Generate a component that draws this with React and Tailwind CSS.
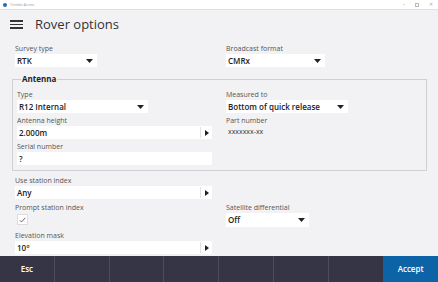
import React from 'react';

const font = { fontFamily: '"Open Sans", "Liberation Sans", sans-serif' };

const DownArrow = () => (
  <svg width="7" height="4" viewBox="0 0 7 4" className="shrink-0">
    <path d="M0 0 H7 L3.5 4 Z" fill="#222" />
  </svg>
);

const RightArrow = () => (
  <svg width="4" height="6" viewBox="0 0 4 6" className="shrink-0">
    <path d="M0 0 L4 3 L0 6 Z" fill="#222" />
  </svg>
);

const Label = ({ children }) => (
  <div className="h-[11px] leading-[11px] text-[7px] text-[#555]">{children}</div>
);

const Select = ({ label, value, width }) => (
  <div>
    <Label>{label}</Label>
    <div className={`flex items-center justify-between h-[13px] bg-white pl-[2px] pr-[4px] ${width}`}>
      <span className="text-[8px] font-semibold text-[#222]">{value}</span>
      <DownArrow />
    </div>
  </div>
);

const Input = ({ label, value, arrow }) => (
  <div>
    <Label>{label}</Label>
    <div className="flex items-center h-[13px] bg-white">
      <span className="flex-1 pl-[2px] text-[8px] font-semibold text-[#222]">{value}</span>
      {arrow && (
        <div className="flex items-center justify-center w-[12px] h-[11px] border-l border-[#e2e2e2]">
          <RightArrow />
        </div>
      )}
    </div>
  </div>
);

export default function App() {
  const footer = ['Esc', '', '', '', '', '', '', 'Accept'];
  return (
    <div className="flex flex-col h-screen bg-[#f2f2f4] overflow-hidden" style={font}>
      {/* window title bar */}
      <div className="flex items-center h-[10px] bg-white border-b border-[#e0e0e0]">
        <div className="w-[4px] h-[4px] rounded-full bg-[#1f6fb0] ml-[3px]" />
        <span className="ml-[3px] text-[3.5px] text-[#999]">Trimble Access</span>
        <div className="ml-auto flex items-center gap-[10px] pr-[5px] text-[5px] text-[#aaa]">
          <span>–</span>
          <span className="w-[4px] h-[4px] border border-[#bbb]" />
          <span>✕</span>
        </div>
      </div>

      {/* header */}
      <div className="flex items-center h-[29px] pl-[10px]">
        <div className="flex flex-col gap-[2px] w-[13px]">
          <div className="h-[1.5px] bg-[#333]" />
          <div className="h-[1.5px] bg-[#333]" />
          <div className="h-[1.5px] bg-[#333]" />
        </div>
        <span className="ml-[12px] text-[13px] text-[#333]">Rover options</span>
      </div>

      <div className="px-[15px] pt-[4px]">
        <div className="grid grid-cols-[197px_1fr] gap-x-[14px]">
          <Select label="Survey type" value="RTK" width="w-[82px]" />
          <Select label="Broadcast format" value="CMRx" width="w-[99px]" />
        </div>

        <fieldset className="-ml-[3px] -mr-[4px] mt-[7px] border border-[#cfcfd4] pl-[4px] pr-[4px] pb-[5px]">
          <legend className="ml-[4px] px-[1px] text-[8px] font-bold text-[#222] leading-[10px]">Antenna</legend>
          <div className="grid grid-cols-[195px_1fr] gap-x-[14px] gap-y-[2px] mt-[5px]">
            <Select label="Type" value="R12 Internal" width="w-[131px]" />
            <Select label="Measured to" value="Bottom of quick release" width="w-[122px]" />
            <Input label="Antenna height" value="2.000m" arrow />
            <div>
              <Label>Part number</Label>
              <div className="h-[13px] flex items-center pl-[2px] text-[7px] text-[#333]">xxxxxxx-xx</div>
            </div>
            <Input label="Serial number" value="?" />
          </div>
        </fieldset>

        <div className="grid grid-cols-[197px_1fr] gap-x-[14px] mt-[4px]">
          <Input label="Use station index" value="Any" arrow />
          <div />
          <div className="mt-[3px]">
            <Label>Prompt station index</Label>
            <div className="ml-[2px] mt-[1px] w-[11px] h-[11px] bg-white border border-[#ddd] flex items-center justify-center">
              <svg width="7" height="6" viewBox="0 0 7 6">
                <path d="M0.8 3.2 L2.6 5 L6.2 0.8" stroke="#444" strokeWidth="0.8" fill="none" />
              </svg>
            </div>
          </div>
          <div className="mt-[3px]">
            <Label>Satellite differential</Label>
            <div className="flex items-center justify-between h-[14px] w-[83px] bg-white pl-[2px] pr-[4px]">
              <span className="text-[8px] font-semibold text-[#222]">Off</span>
              <DownArrow />
            </div>
          </div>
          <div className="mt-[3px]">
            <Input label="Elevation mask" value="10°" arrow />
          </div>
        </div>
      </div>

      {/* footer buttons */}
      <div className="mt-auto grid grid-cols-8 h-[26px] bg-[#363545]">
        {footer.map((t, i) => (
          <div
            key={i}
            className={`flex items-center justify-center text-[8px] font-semibold text-white ${
              i === 7 ? 'bg-[#0c63a6]' : i < 6 ? 'border-r border-[#4d4c5c]' : ''
            }`}
          >
            {t}
          </div>
        ))}
      </div>
    </div>
  );
}
